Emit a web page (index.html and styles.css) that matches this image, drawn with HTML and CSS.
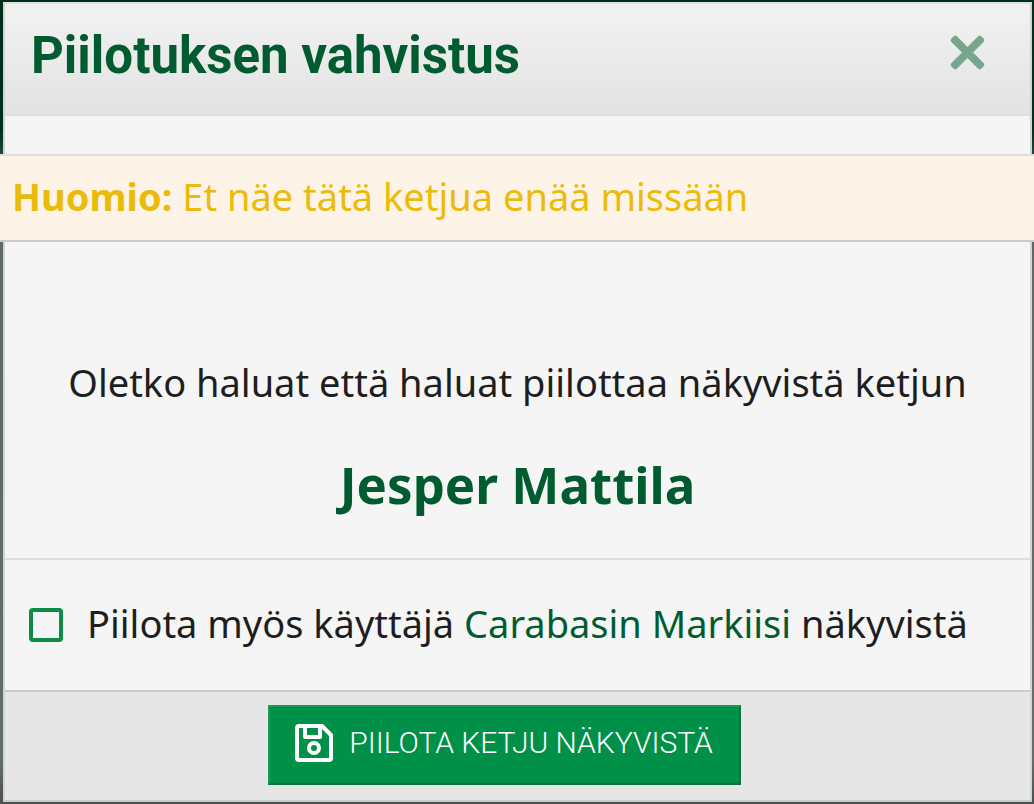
FILE: index.html
```
<!DOCTYPE html>
<html lang="fi">
<head>
<meta charset="utf-8">
<meta name="viewport" content="width=device-width, initial-scale=1.0">
<title>Piilotuksen vahvistus</title>
<link rel="stylesheet" href="styles.css">
</head>
<body>

<form class="overlay" role="dialog" aria-labelledby="overlay-title">
<div class="overlay-header">
<h1 class="overlay-title" id="overlay-title">Piilotuksen vahvistus</h1>
<button class="overlay-close" type="button" aria-label="Sulje">
<svg viewBox="0 0 36 36" width="36" height="36"><path d="M1.2 6.8Q0 5.2 1.2 3.8L3.8 1.2Q5.2 0 6.8 1.2L17.5 12 28.2 1.2Q29.8 0 31.2 1.2L33.8 3.8Q35 5.2 33.8 6.8L23 17.5 33.8 28.2Q35 29.8 33.8 31.2L31.2 33.8Q29.8 35 28.2 33.8L17.5 23 6.8 33.8Q5.2 35 3.8 33.8L1.2 31.2Q0 29.8 1.2 28.2L12 17.5z" fill="currentColor"/></svg>
</button>
</div>

<p class="notice"><strong>Huomio:</strong> Et näe tätä ketjua enää missään</p>

<div class="message">
<p>Oletko haluat että haluat piilottaa näkyvistä ketjun</p>
<strong class="thread">Jesper Mattila</strong>
</div>

<div class="option">
<input type="checkbox" id="hide-user">
<label for="hide-user">Piilota myös käyttäjä <a href="#">Carabasin Markiisi</a> näkyvistä</label>
</div>

<div class="overlay-footer">
<button class="button" type="submit">
<svg viewBox="0 0 38 38" width="38" height="38" fill="none" stroke="currentColor" stroke-width="4" stroke-linejoin="round"><path d="M4 2h23l9 9v23a2 2 0 0 1-2 2H4a2 2 0 0 1-2-2V4a2 2 0 0 1 2-2z"/><path d="M10 2v11h15V2"/><circle cx="19" cy="24" r="5"/></svg>
<span>PIILOTA KETJU NÄKYVISTÄ</span>
</button>
</div>
</form>

</body>
</html>
```

FILE: styles.css
```
* {
    box-sizing: border-box;
}

body {
    margin: 0;
    min-height: 100vh;
    padding: 2px 2px 2px 3px;
    background: linear-gradient(#002f1a 0, #002f1a 130px, #5e6764 190px, #646d6a 760px, #4c4f4e 804px);
    color: #1e1e1e;
    font-family: "Noto Sans", sans-serif;
    font-size: 38px;
    line-height: 52px;
    overflow-x: hidden;
}

p {
    margin: 0;
}

.overlay {
    background-color: #f5f5f5;
    border: 2px solid #cbcbcb;
    border-color: #dfe3e0 #d2d4d3 #cbcbcb;
}

.overlay-header {
    display: flex;
    align-items: flex-start;
    justify-content: space-between;
    padding: 20px 44px 26px 26px;
    background: linear-gradient(#f2f2f2, #e3e3e3);
    border-bottom: 2px solid #dfdfdf;
}

.overlay-title {
    margin: 0;
    color: #005c30;
    font-family: Roboto, sans-serif;
    font-size: 51px;
    font-weight: 700;
    line-height: 64px;
}

.overlay-close {
    display: flex;
    margin-top: 11px;
    padding: 0;
    background: none;
    border: 0;
    color: #77a58e;
    cursor: pointer;
}

.notice {
    margin: 38px -5px 0;
    padding: 14px 12px 18px;
    background-color: #fef3e7;
    border-top: 2px solid #dfe0dc;
    border-bottom: 2px solid #cbcbcb;
    color: #ebbb0b;
}

.message {
    padding: 114px 24px 38px;
    border-bottom: 2px solid #dfdfdf;
    text-align: center;
}

.thread {
    display: block;
    margin-top: 40px;
    color: #005c30;
    font-size: 51px;
    line-height: 72px;
}

.option {
    display: flex;
    align-items: center;
    gap: 24px;
    padding: 37px 24px 41px;
    border-bottom: 2px solid #cbcbcb;
}

.option input {
    appearance: none;
    flex: none;
    width: 34px;
    height: 34px;
    margin: 4px 0 0;
    border: 4px solid #0b8c48;
    border-radius: 4px;
}

.option input:checked {
    background-color: #0b8c48;
}

.option a {
    color: #005c30;
    text-decoration: none;
}

.overlay-footer {
    display: flex;
    justify-content: center;
    padding: 13px 26px 15px 0;
    background-color: #e6e6e6;
}

.button {
    display: flex;
    align-items: center;
    gap: 16px;
    padding: 16px 26px 20px 25px;
    background-color: #009048;
    border: 2px solid;
    border-color: #149b57 #0c7341 #0c7341 #149b57;
    color: #fff;
    font-family: Roboto, sans-serif;
    font-size: 30px;
    font-weight: 300;
    line-height: 40px;
    cursor: pointer;
}
```
